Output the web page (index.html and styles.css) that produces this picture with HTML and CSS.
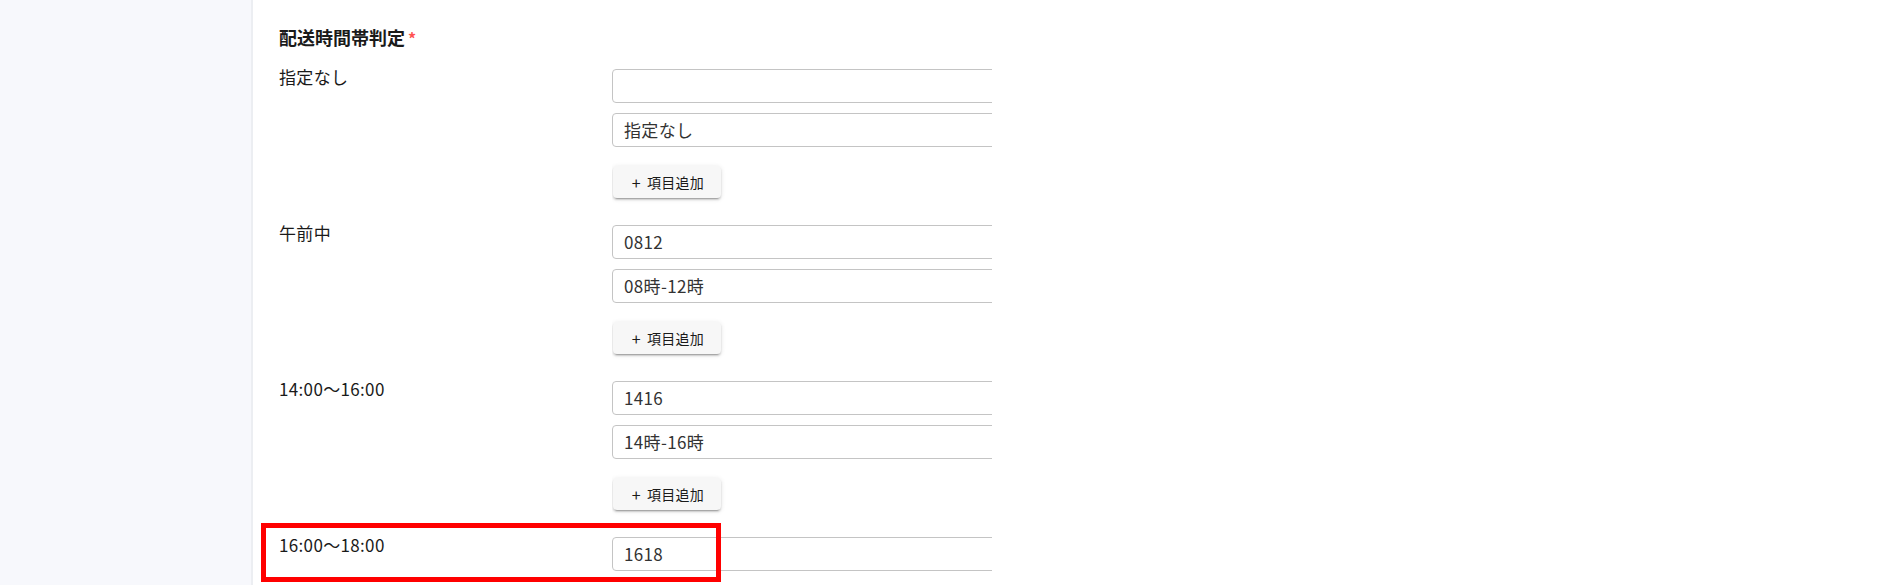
FILE: index.html
```html
<!DOCTYPE html>
<html lang="ja">
<head>
<meta charset="utf-8">
<title>配送時間帯判定</title>
<link rel="stylesheet" href="styles.css">
</head>
<body>
<div class="layout">
  <aside class="sidebar"></aside>
  <main class="main">
    <h2 class="title">配送時間帯判定<span class="req">*</span></h2>
    <div class="groups">
      <div class="group">
        <div class="label">指定なし</div>
        <div class="fields">
          <div class="input"></div>
          <div class="input">指定なし</div>
          <button class="add-btn"><span class="plus">+</span>項目追加</button>
        </div>
      </div>
      <div class="group">
        <div class="label">午前中</div>
        <div class="fields">
          <div class="input">0812</div>
          <div class="input">08時-12時</div>
          <button class="add-btn"><span class="plus">+</span>項目追加</button>
        </div>
      </div>
      <div class="group">
        <div class="label">14:00〜16:00</div>
        <div class="fields">
          <div class="input">1416</div>
          <div class="input">14時-16時</div>
          <button class="add-btn"><span class="plus">+</span>項目追加</button>
        </div>
      </div>
      <div class="group">
        <div class="label">16:00〜18:00</div>
        <div class="fields">
          <div class="input">1618</div>
        </div>
        <div class="mark"></div>
      </div>
    </div>
  </main>
</div>
</body>
</html>
```
FILE: styles.css
```css
html, body {
  margin: 0;
  padding: 0;
  background: #ffffff;
  font-family: "Noto Sans CJK JP", "Noto Sans", sans-serif;
  color: rgba(0, 0, 0, 0.87);
}

.layout {
  display: flex;
  min-height: 100vh;
}

.sidebar {
  width: 251px;
  flex: 0 0 251px;
  background: #f7f8fc;
  border-right: 2px solid #eceef2;
}

.main {
  flex: 1;
  padding: 24px 0 0 26px;
}

.title {
  margin: 0 0 18px 0;
  font-size: 18px;
  line-height: 26px;
  font-weight: 700;
  color: #1a1a1a;
}

.req {
  color: #ff5252;
  margin-left: 3px;
  font-size: 16px;
}

.groups {
  display: flex;
  flex-direction: column;
  gap: 27px;
}

.group {
  position: relative;
  display: flex;
  width: 713px;
}

.label {
  width: 333px;
  flex: 0 0 333px;
  font-size: 17px;
  line-height: 16px;
  letter-spacing: 0.02em;
  color: #1a1a1a;
}

.fields {
  width: 380px;
  overflow: hidden;
  display: flex;
  flex-direction: column;
  align-items: flex-start;
}

.input {
  box-sizing: border-box;
  width: 600px;
  height: 34px;
  border: 1px solid #c4c4c4;
  border-radius: 4px;
  padding: 0 11px;
  font-size: 17px;
  line-height: 32px;
  color: #333333;
  letter-spacing: 0.02em;
  margin-bottom: 10px;
}

.input + .input {
  margin-bottom: 19px;
}

.input:last-child {
  margin-bottom: 0;
}

.add-btn {
  box-sizing: border-box;
  width: 108px;
  height: 32px;
  margin: 0 0 6px 1px;
  border: none;
  border-radius: 4px;
  background: #f7f7f7;
  box-shadow: 0 3px 1px -2px rgba(0, 0, 0, 0.2), 0 2px 2px 0 rgba(0, 0, 0, 0.14), 0 1px 5px 0 rgba(0, 0, 0, 0.12);
  font-family: "Noto Sans CJK JP", "Noto Sans", sans-serif;
  font-size: 14px;
  color: #1a1a1a;
  letter-spacing: 0.02em;
  padding: 0 0 0 2px;
  display: flex;
  align-items: center;
  justify-content: center;
}

.group:has(.add-btn) {
  margin-bottom: -6px;
}

.plus {
  font-size: 16px;
  margin-right: 6px;
}

.mark {
  position: absolute;
  left: -18px;
  top: -14px;
  width: 460px;
  height: 59px;
  box-sizing: border-box;
  border: 5px solid #ff0000;
}
```
